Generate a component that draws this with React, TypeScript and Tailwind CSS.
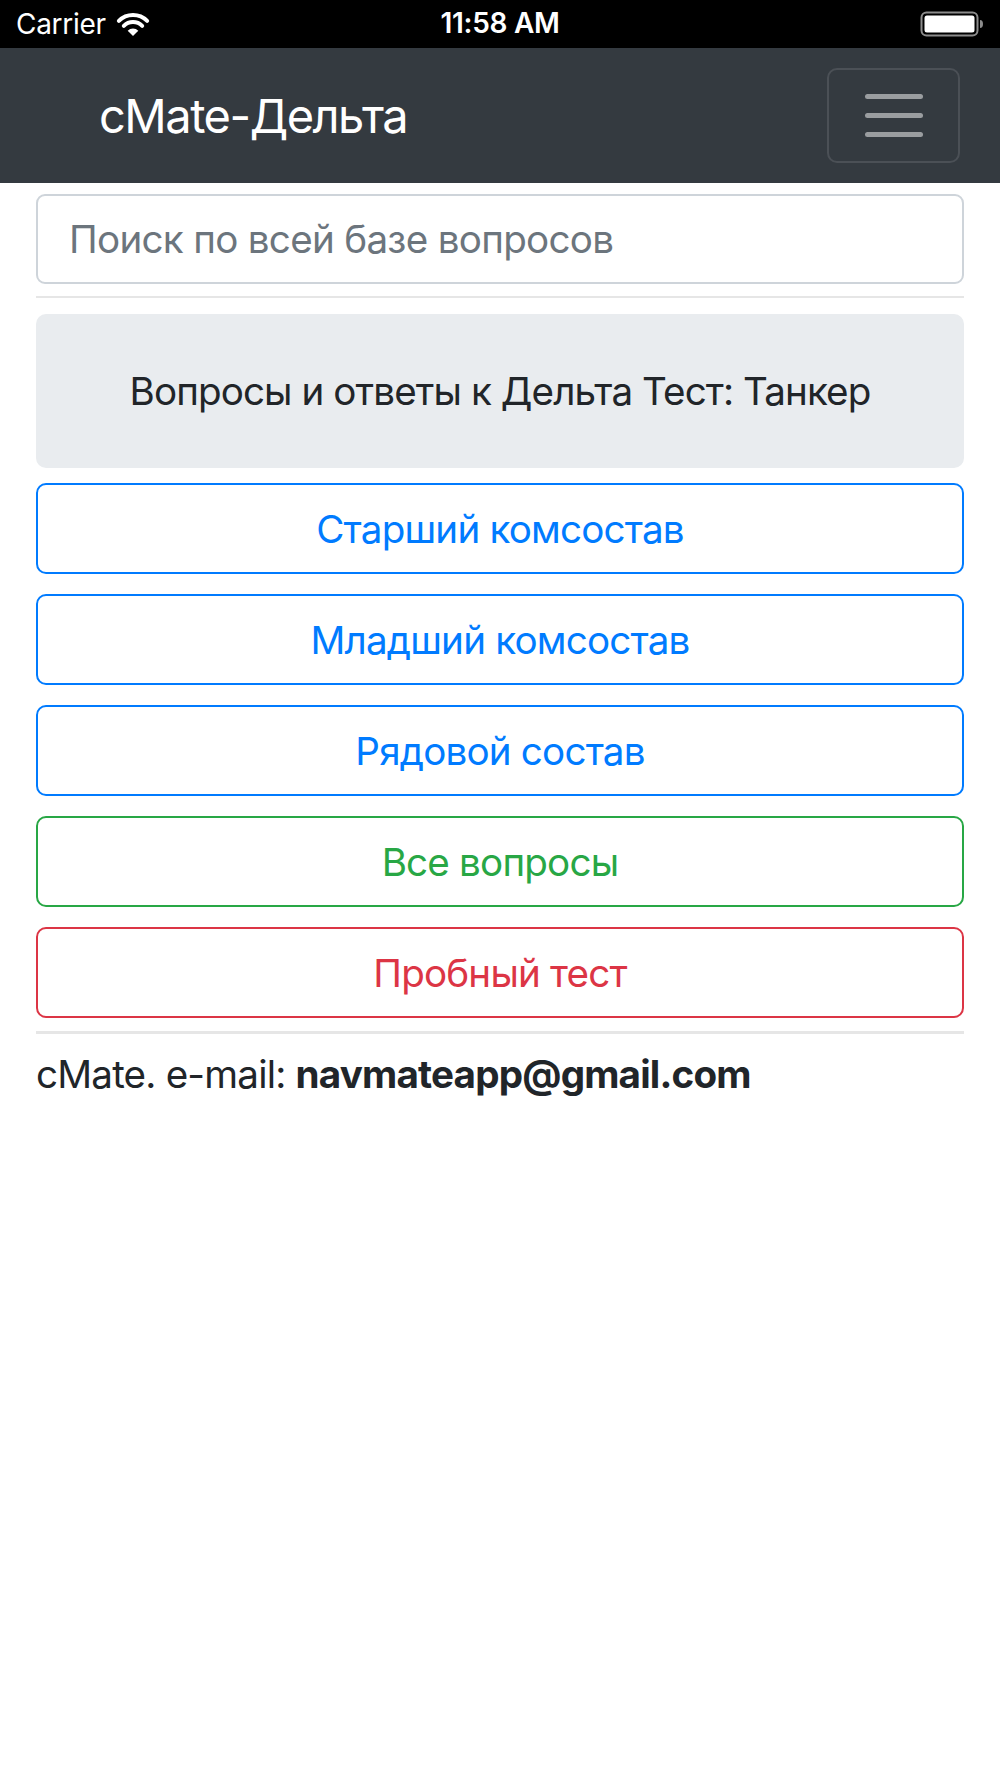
import React from "react";

function Wifi() {
  return (
    <svg width="34" height="25" viewBox="0 0 34 25" fill="none">
      <path d="M2.86 8.86 A20 20 0 0 1 31.14 8.86" stroke="white" strokeWidth="4" strokeLinecap="round" />
      <path d="M7.81 13.81 A13 13 0 0 1 26.19 13.81" stroke="white" strokeWidth="4" strokeLinecap="round" />
      <path d="M17 24 L11.7 18.7 A7.5 7.5 0 0 1 22.3 18.7 Z" fill="white" />
    </svg>
  );
}

function Battery() {
  return (
    <svg width="64" height="26" viewBox="0 0 64 26" fill="none">
      <rect x="1.5" y="1.5" width="56" height="23" rx="5" stroke="white" strokeOpacity="0.55" strokeWidth="2" />
      <rect x="4.5" y="4.5" width="50" height="17" rx="2.5" fill="white" />
      <path d="M60 9 a3 4 0 0 1 0 8 Z" fill="white" fillOpacity="0.55" />
    </svg>
  );
}

const btn =
  "flex h-[91px] w-full items-center justify-center rounded-[10px] border-[2.4px] bg-white text-[38.6px] leading-none tracking-[-0.8px]";

export default function App() {
  return (
    <div
      className="min-h-[1778px] w-[1000px] bg-white text-[#212529]"
      style={{ fontFamily: "Inter, 'Noto Sans', sans-serif" }}
    >
      {/* status bar */}
      <div className="relative flex h-[48px] items-center bg-black px-[16px] text-white">
        <div className="flex items-center gap-[10px]">
          <span className="text-[28px] leading-none tracking-[-0.3px]">Carrier</span>
          <Wifi />
        </div>
        <span className="absolute left-1/2 top-[9px] -translate-x-1/2 text-[28px] font-semibold leading-none tracking-[-0.3px]">
          11:58 AM
        </span>
        <div className="ml-auto">
          <Battery />
        </div>
      </div>

      {/* navbar */}
      <div className="flex h-[135px] items-center justify-between bg-[#343a40] pl-[99px] pr-[40px]">
        <span className="text-[47px] leading-none text-white tracking-[-1.5px]">cMate-Дельта</span>
        <div className="flex h-[95px] w-[133px] flex-col items-center justify-center gap-[14px] rounded-[10px] border-[2.4px] border-[#4b5056]">
          <div className="h-[5px] w-[58px] rounded-full bg-[#9a9da0]" />
          <div className="h-[5px] w-[58px] rounded-full bg-[#9a9da0]" />
          <div className="h-[5px] w-[58px] rounded-full bg-[#9a9da0]" />
        </div>
      </div>

      {/* content */}
      <div className="px-[36px]">
        <input
          readOnly
          placeholder="Поиск по всей базе вопросов"
          className="mt-[11px] block h-[90px] w-full rounded-[9px] border-[2.4px] border-[#ced4da] bg-white px-[31px] text-[38.6px] tracking-[-0.7px] text-[#495057] outline-none placeholder:text-[#6c757d]"
          style={{ fontFamily: "Inter, 'Noto Sans', sans-serif" }}
        />
        <div className="mt-[12px] h-[2.4px] bg-[#e6e6e6]" />

        <div className="mt-[16px] flex h-[154px] items-center justify-center rounded-[10px] bg-[#e9ecef] text-[38.6px] leading-none tracking-[-0.9px]">
          Вопросы и ответы к Дельта Тест: Танкер
        </div>

        <div className="mt-[15px] flex flex-col gap-[20px]">
          <div className={`${btn} border-[#007bff] text-[#007bff]`}>Старший комсостав</div>
          <div className={`${btn} border-[#007bff] text-[#007bff]`}>Младший комсостав</div>
          <div className={`${btn} border-[#007bff] text-[#007bff]`}>Рядовой состав</div>
          <div className={`${btn} border-[#28a745] text-[#28a745]`}>Все вопросы</div>
          <div className={`${btn} border-[#dc3545] text-[#dc3545]`}>Пробный тест</div>
        </div>

        <div className="mt-[13px] h-[2.4px] bg-[#e6e6e6]" />

        <p className="mt-[12px] text-[38.6px] leading-[1.5] tracking-[-0.8px]">
          cMate. e-mail: <b className="font-bold">navmateapp@gmail.com</b>
        </p>
      </div>
    </div>
  );
}
